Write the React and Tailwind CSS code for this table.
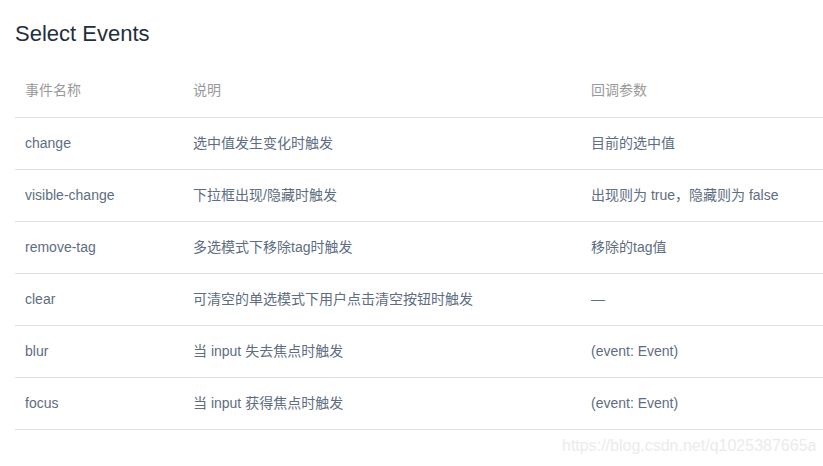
export default function App() {
  const rows = [
    ["change", "选中值发生变化时触发", "目前的选中值"],
    ["visible-change", "下拉框出现/隐藏时触发", "出现则为 true，隐藏则为 false"],
    ["remove-tag", "多选模式下移除tag时触发", "移除的tag值"],
    ["clear", "可清空的单选模式下用户点击清空按钮时触发", "—"],
    ["blur", "当 input 失去焦点时触发", "(event: Event)"],
    ["focus", "当 input 获得焦点时触发", "(event: Event)"],
  ];
  return (
    <div
      className="relative w-[823px] h-[466px] bg-white overflow-hidden pt-[17px] pl-[15px]"
      style={{ fontFamily: '"Liberation Sans", "Noto Sans CJK SC", sans-serif' }}
    >
      <h3 className="text-[22px] leading-[33px] font-normal text-[#1f2f3d]">Select Events</h3>
      <table className="mt-[15px] w-[808px] border-collapse text-[14px] leading-[21px] table-fixed">
        <colgroup>
          <col className="w-[168px]" />
          <col className="w-[398px]" />
          <col />
        </colgroup>
        <thead>
          <tr className="border-b border-[#dcdfe6]">
            <th className="text-left font-normal text-[#999] py-[15px] px-[10px] h-[52px]">事件名称</th>
            <th className="text-left font-normal text-[#999] py-[15px] px-[10px]">说明</th>
            <th className="text-left font-normal text-[#999] py-[15px] px-[10px]">回调参数</th>
          </tr>
        </thead>
        <tbody>
          {rows.map((r) => (
            <tr key={r[0]} className="border-b border-[#dcdfe6]">
              <td className="text-[#5e6d82] py-[15px] px-[10px] h-[52px] whitespace-nowrap">{r[0]}</td>
              <td className="text-[#5e6d82] py-[15px] px-[10px] whitespace-nowrap">{r[1]}</td>
              <td className="text-[#5e6d82] py-[15px] px-[10px] whitespace-nowrap">{r[2]}</td>
            </tr>
          ))}
        </tbody>
      </table>
      <div className="absolute left-[562px] top-[434px] text-[16px] leading-[24px] text-[#ebebeb] whitespace-nowrap">
        https://blog.csdn.net/q1025387665a
      </div>
    </div>
  );
}
